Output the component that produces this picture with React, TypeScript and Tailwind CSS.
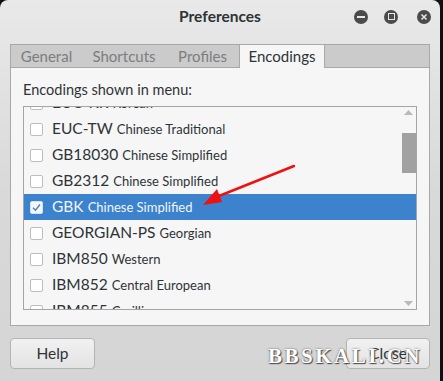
import React from 'react';

type Enc = { name: string; desc: string; checked?: boolean };

const encodings: Enc[] = [
  { name: 'EUC-KR', desc: 'Korean' },
  { name: 'EUC-TW', desc: 'Chinese Traditional' },
  { name: 'GB18030', desc: 'Chinese Simplified' },
  { name: 'GB2312', desc: 'Chinese Simplified' },
  { name: 'GBK', desc: 'Chinese Simplified', checked: true },
  { name: 'GEORGIAN-PS', desc: 'Georgian' },
  { name: 'IBM850', desc: 'Western' },
  { name: 'IBM852', desc: 'Central European' },
  { name: 'IBM855', desc: 'Cyrillic' },
];

const tabs = [
  { label: 'General', w: 'w-[71px]' },
  { label: 'Shortcuts', w: 'w-[84px]' },
  { label: 'Profiles', w: 'w-[73px]' },
  { label: 'Encodings', w: 'w-[86px]' },
];

function Row({ enc }: { enc: Enc }) {
  const sel = !!enc.checked;
  return (
    <div className={`flex items-center h-[26px] pl-[6px] ${sel ? 'bg-[#3d82cd] text-[#f0f5fb]' : 'text-[#2e3436]'}`}>
      <span
        className={`w-[13px] h-[13px] rounded-[2px] border flex items-center justify-center ${
          sel ? 'bg-[#f4f7fb] border-[#d5e2f2]' : 'bg-white border-[#bdbdbd]'
        }`}
      >
        {sel && (
          <svg width="9" height="9" viewBox="0 0 9 9">
            <path d="M1 4.8 L3.5 7.2 L8 1.5" fill="none" stroke="#3d82cd" strokeWidth="1.3" />
          </svg>
        )}
      </span>
      <span className="ml-[9px] text-[15.5px] leading-none">{enc.name}</span>
      <span className="ml-[4px] text-[13px] leading-none">{enc.desc}</span>
    </div>
  );
}

export default function App() {
  return (
    <div className="w-[443px] h-[381px] bg-[#111] flex overflow-hidden" style={{ fontFamily: 'Lato, "Noto Sans", sans-serif' }}>
      <div className="relative w-[440px] h-full rounded-t-[8px] bg-gradient-to-b from-[#e9e9e9] via-[#d9d9d9] to-[#d5d5d5] flex flex-col">
        {/* Title bar */}
        <div className="grid grid-cols-[1fr_auto_1fr] items-center h-[33px]">
          <div />
          <div className="text-[15.5px] font-bold text-[#2e3436] pt-[1px]">Preferences</div>
          <div className="flex justify-end items-center pr-[9px]">
            <span className="w-[14px] h-[14px] rounded-full bg-[#4b4b4b] flex items-center justify-center">
              <span className="w-[8px] h-[2px] bg-[#e6e6e6]" />
            </span>
            <span className="ml-[16px] w-[14px] h-[14px] rounded-full bg-[#4b4b4b] flex items-center justify-center">
              <span className="w-[7px] h-[7px] border-[1.5px] border-[#e6e6e6]" />
            </span>
            <span className="ml-[19px] w-[14px] h-[14px] rounded-full bg-[#4b4b4b] flex items-center justify-center">
              <svg width="8" height="8" viewBox="0 0 8 8">
                <path d="M1.5 1.5 L6.5 6.5 M6.5 1.5 L1.5 6.5" stroke="#e6e6e6" strokeWidth="1.5" />
              </svg>
            </span>
          </div>
        </div>

        {/* Notebook */}
        <div className="mx-[10px] mt-[11px] border border-[#a8a8a8] flex flex-col">
          <div className="h-[23px] bg-[#cbcbcb] border-b border-[#a8a8a8] flex items-end text-[15px]">
            {tabs.map((t) => {
              const active = t.label === 'Encodings';
              return (
                <div
                  key={t.label}
                  className={`${t.w} ${
                    active
                      ? 'h-[23px] -mb-px bg-[#f6f6f6] border-x border-[#a8a8a8] text-[#2e3436]'
                      : 'h-[22px] text-[#7b7e7f]'
                  } flex items-center justify-center`}
                >
                  {t.label}
                </div>
              );
            })}
          </div>
          <div className="bg-[#f6f6f6] h-[257px] px-[12px] pt-[12px] flex flex-col">
            <div className="text-[14.5px] leading-[20px] text-[#2e3436]">Encodings shown in menu:</div>
            <div className="relative mt-[6px] h-[204px] border border-[#a4a4a4] overflow-hidden">
              <div className="-mt-[17px]">
                {encodings.map((e) => (
                  <Row key={e.name} enc={e} />
                ))}
              </div>
              {/* overlay scrollbar */}
              <svg className="absolute right-[3px] top-[3px]" width="9" height="5" viewBox="0 0 9 5">
                <path d="M0 5 L4.5 0 L9 5 Z" fill="#b9b9b9" />
              </svg>
              <div className="absolute right-0 top-[26px] w-[14px] h-[40px] bg-[#a1a1a1]" />
              <svg className="absolute right-[3px] bottom-[3px]" width="9" height="5" viewBox="0 0 9 5">
                <path d="M0 0 L4.5 5 L9 0 Z" fill="#b9b9b9" />
              </svg>
            </div>
          </div>
        </div>

        {/* Buttons */}
        <div className="flex justify-between mx-[10px] mt-[12px]">
          <button className="w-[85px] h-[31px] rounded-[4px] border border-[#b4b4b4] bg-gradient-to-b from-[#f1f1f1] to-[#e3e3e3] text-[15.5px] text-[#2e3436]">
            Help
          </button>
          <button className="w-[84px] h-[31px] rounded-[4px] border border-[#b4b4b4] bg-gradient-to-b from-[#f1f1f1] to-[#e3e3e3] text-[15.5px] text-[#2e3436]">
            Close
          </button>
        </div>

        {/* red annotation arrow */}
        <svg className="absolute left-0 top-0 pointer-events-none" width="440" height="381">
          <path d="M294 166 L214 198" stroke="#f01010" strokeWidth="2.5" strokeLinecap="round" />
          <path d="M203 205 L217 189 L222 202 Z" fill="#f01010" />
        </svg>

        {/* watermark */}
        <div
          className="absolute left-[268px] top-[341px] text-[21px] font-bold tracking-[2.5px] text-white"
          style={{ fontFamily: '"Liberation Serif", serif', textShadow: '0 0 2px #555, 1px 1px 1px #444' }}
        >
          BBSKALI.CN
        </div>
      </div>
    </div>
  );
}
